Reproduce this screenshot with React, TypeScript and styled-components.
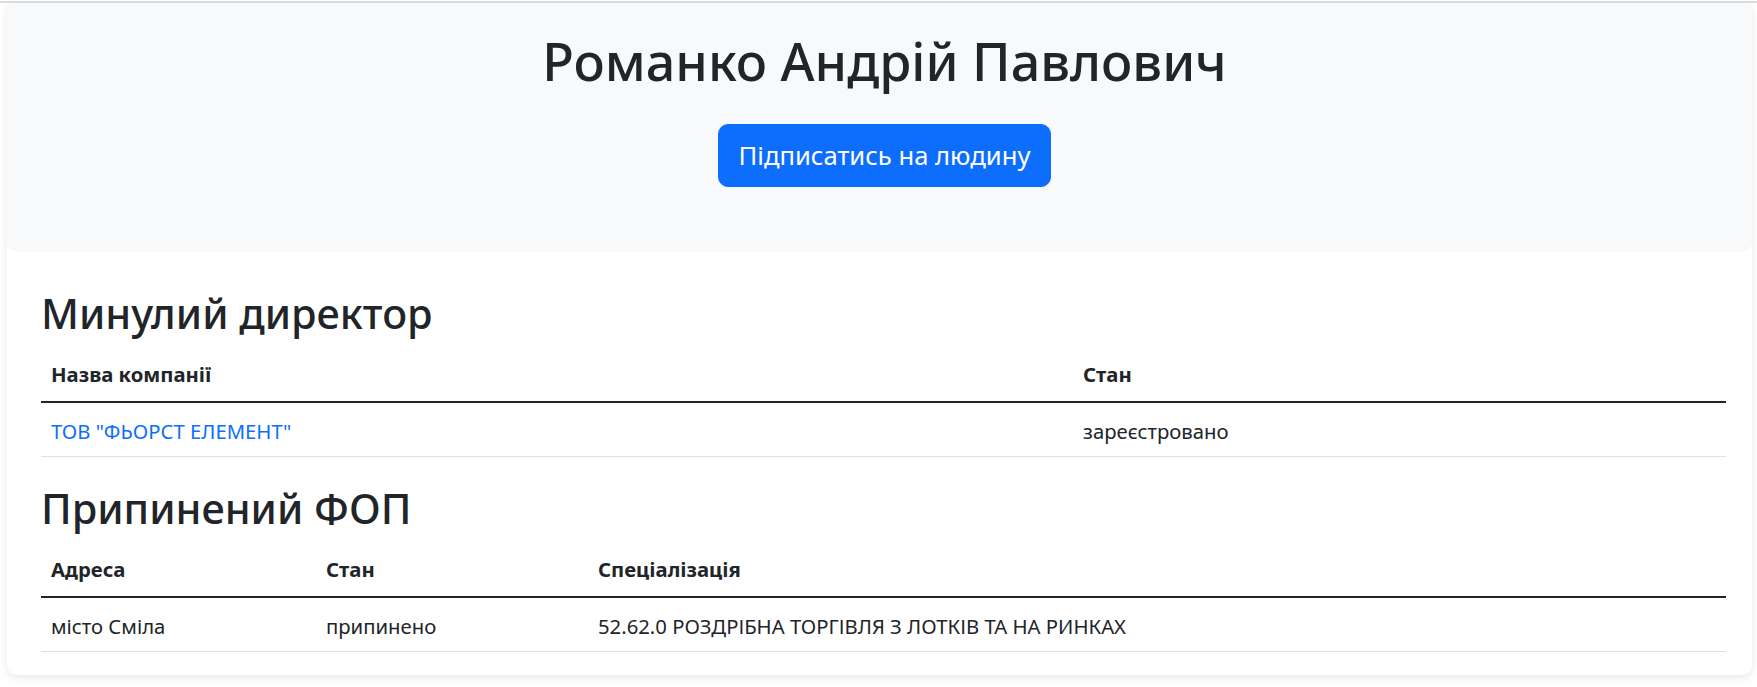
import React, { FC } from 'react';
import styled, { createGlobalStyle } from 'styled-components';

// page-wide reset, the reference looks like a bootstrap page rendered at 125%
const GlobalStyle = createGlobalStyle`
  html, body {
    margin: 0;
    padding: 0;
    background: #fff;
  }
  body {
    font-family: "Noto Sans", "Open Sans", sans-serif;
    font-size: 20.3px;
    line-height: 1.5;
    color: #212529;
  }
  * { box-sizing: border-box; }
`;

const StyledPage = styled.div`
  border-top: 2px solid #dcdde0;
  margin-top: 1px;
  padding: 1px 5px 10px 7px;
`;

const StyledCard = styled.div`
  background: #fff;
  border-radius: 0 0 10px 10px;
  box-shadow: 0 3px 10px rgba(0, 0, 0, 0.09);
  padding-bottom: 23px;
`;

const StyledHero = styled.div`
  background-color: #f8f9fa;
  border-radius: 0 0 10px 10px;
  padding: 27px 15px 65px 25px;
  display: flex;
  flex-direction: column;
  align-items: center;
`;

const StyledTitle = styled.h1`
  margin: 0 0 33px;
  font-size: 52px;
  font-weight: 500;
  line-height: 60px;
`;

const StyledButton = styled.button`
  font-family: inherit;
  font-size: 25.6px;
  line-height: 37px;
  padding: 12px 20px;
  color: #fff;
  background-color: #0d6efd;
  border: 1px solid #0d6efd;
  border-radius: 10px;
  cursor: pointer;
`;

const StyledBody = styled.div`
  padding: 37px 26px 0 34px;
`;

const StyledHeading = styled.h2`
  margin: 0 0 10px;
  font-size: 41.4px;
  font-weight: 500;
  line-height: 48px;
`;

const StyledTable = styled.table<{ $last?: boolean }>`
  width: 100%;
  border-collapse: collapse;
  margin-bottom: ${(p) => (p.$last ? '0' : '27px')};
  table-layout: fixed;
`;

const StyledTh = styled.th<{ $width?: number }>`
  width: ${(p) => (p.$width ? `${p.$width}px` : 'auto')};
  text-align: left;
  font-weight: 700;
  padding: 12px 10px;
  line-height: 30px;
  border-bottom: 2px solid #212529;
`;

const StyledTd = styled.td`
  padding: 13px 10px 10px;
  line-height: 30px;
  border-bottom: 1px solid #dee2e6;
`;

const StyledLink = styled.a`
  color: #0d6efd;
  text-decoration: none;
`;

const directors = [{ name: 'ТОВ "ФЬОРСТ ЕЛЕМЕНТ"', state: 'зареєстровано' }];

const fops = [
  {
    address: 'місто Сміла',
    state: 'припинено',
    activity: '52.62.0 РОЗДРІБНА ТОРГІВЛЯ З ЛОТКІВ ТА НА РИНКАХ',
  },
];

const App: FC = () => (
  <>
    <GlobalStyle />
    <StyledPage>
      <StyledCard>
        <StyledHero>
          <StyledTitle>Романко Андрій Павлович</StyledTitle>
          <StyledButton>Підписатись на людину</StyledButton>
        </StyledHero>

        <StyledBody>
          <StyledHeading>Минулий директор</StyledHeading>
          <StyledTable>
            <thead>
              <tr>
                <StyledTh $width={1032}>Назва компанії</StyledTh>
                <StyledTh>Стан</StyledTh>
              </tr>
            </thead>
            <tbody>
              {directors.map((d) => (
                <tr key={d.name}>
                  <StyledTd>
                    <StyledLink href="#">{d.name}</StyledLink>
                  </StyledTd>
                  <StyledTd>{d.state}</StyledTd>
                </tr>
              ))}
            </tbody>
          </StyledTable>

          <StyledHeading>Припинений ФОП</StyledHeading>
          <StyledTable $last>
            <thead>
              <tr>
                <StyledTh $width={275}>Адреса</StyledTh>
                <StyledTh $width={272}>Стан</StyledTh>
                <StyledTh>Спеціалізація</StyledTh>
              </tr>
            </thead>
            <tbody>
              {fops.map((f) => (
                <tr key={f.activity}>
                  <StyledTd>{f.address}</StyledTd>
                  <StyledTd>{f.state}</StyledTd>
                  <StyledTd>{f.activity}</StyledTd>
                </tr>
              ))}
            </tbody>
          </StyledTable>
        </StyledBody>
      </StyledCard>
    </StyledPage>
  </>
);

export default App;
